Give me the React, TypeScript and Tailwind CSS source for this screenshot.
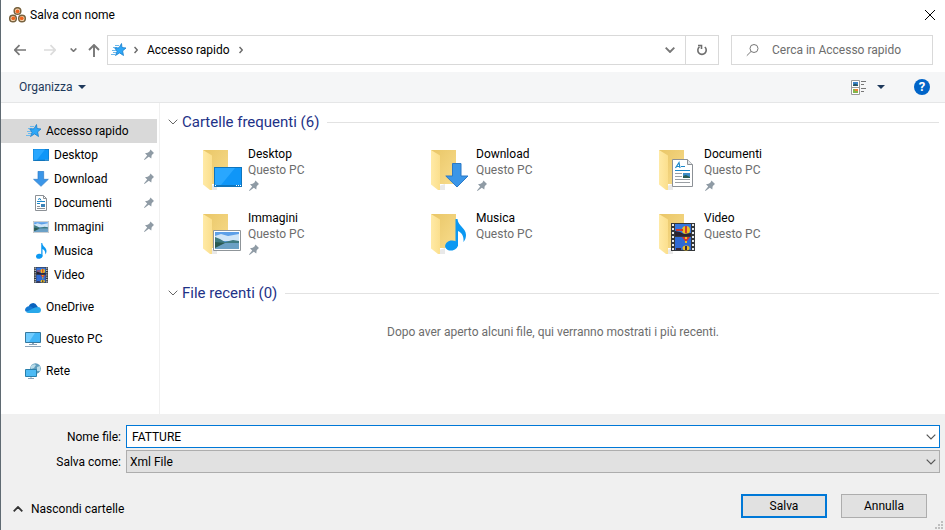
import type { ReactNode } from "react";

function Pin() {
  return (
    <svg width="12" height="12" viewBox="0 0 12 12" className="shrink-0" aria-hidden="true">
      <path d="M7.500 .5 11 4 9.800 5 8.600 6.500 8.300 9.500 5.800 7.800 1.500 11 1 10.500 4.200 6.500 2 4.300 4.700 3.800 6.500 2.400Z" fill="#8f9ba5" />
    </svg>
  );
}

function StarIcon() {
  return (
    <svg width="16" height="16" viewBox="0 0 16 16" className="shrink-0" aria-hidden="true">
      <path d="M4 3.500H8M2 5.500H6M1 8.500H5M2 10.500H5M0 12.500H4" stroke="#6db9ec" />
      <path d="M10.500 1.500 11 5.500 15 6 11.600 8.900 12.500 13.500 8.600 10.900 4.500 13.500 6 9.300 3.800 6 8 5.800Z" fill="#2ea7f7" stroke="#1b7fcb" strokeWidth=".8" />
    </svg>
  );
}

function DesktopArt() {
  return (
    <g>
      <path d="M0 0H28V20H0Z" fill="#0f75bd" />
      <path d="M1 1H27V18H1Z" fill="#0f96f8" />
      <path d="M1 1H21L7 18H1Z" fill="#29a7ff" />
      <path d="M1 18.500H3M22 18.500H27" stroke="#fff" strokeDasharray="1 1" />
    </g>
  );
}

function ArrowArt() {
  return <path d="M7.500.5H16V13H23L12 24 .8 13H7.500Z" fill="#3b96e8" stroke="#2b79c6" />;
}

function DocumentArt() {
  return (
    <g>
      <path d="M.5.500H15.500L20.500 5.500V27.500H.5Z" fill="#fff" stroke="#8c9196" />
      <path d="M15.500.500V5.500H20.500" fill="#e6e8ea" stroke="#8c9196" />
      <path d="M3.500 9 7 3.500 8 9M5 7.500H8M9 7.500H13M3 11.500H18" fill="none" stroke="#1b87c9" strokeWidth="1.200" />
      <path d="M3 14.500H10M3 17.500H10M3 20.500H18M3 23.500H18" stroke="#9a9fa4" />
      <path d="M11 14H18V19H11Z" fill="#3c8cc8" />
      <path d="M11 17 14 16 18 18V19H11Z" fill="#285b54" />
    </g>
  );
}

function PhotoArt() {
  return (
    <g>
      <path d="M.5.500H27.500V20.500H.5Z" fill="#fff" stroke="#8f9599" />
      <path d="M2 2H26V19H2Z" fill="#5c9fe8" />
      <path d="M2 6 8 4 15 6 26 4V11H2Z" fill="#cfe5f8" />
      <path d="M2 7 7 9 12 12 20 10 26 11V14H2Z" fill="#3f7a80" />
      <path d="M2 13H26V19H2Z" fill="#6ba0c4" />
      <path d="M2 12 12 13 2 18Z" fill="#2b5a50" />
    </g>
  );
}

function NoteArt() {
  return (
    <g fill="#0b98f2">
      <ellipse cx="6.500" cy="26.500" rx="6.500" ry="5" transform="rotate(-12 6.500 26.500)" />
      <path d="M10.500 0H12.500C13 7 21 9 21 16 21 19 20 21 18.500 23 19 17 17 14 13 12V27H10.500Z" />
    </g>
  );
}

function FilmArt() {
  return (
    <g>
      <path d="M0 0H24V28H0Z" fill="#34373a" />
      <path d="M2 1V28M22 1V28" stroke="#e7e9ea" strokeWidth="2" strokeDasharray="2 2" />
      <path d="M4 1H20V13H4Z" fill="#3576de" />
      <path d="M4 14H20V27H4Z" fill="#2f69d4" />
      <ellipse cx="15" cy="7" rx="4" ry="4" fill="#edbf20" />
      <path d="M14 3H16V10H14ZM5 6H12V8H5Z" fill="#c93a31" />
      <path d="M4 8 9 9 13 11 20 10V13H4Z" fill="#2a2330" />
      <path d="M11 14H19L16 18H14Z" fill="#d3352c" />
      <path d="M14 14H16V16H14ZM14 18H16V20H14Z" fill="#edbf20" />
      <ellipse cx="15" cy="25" rx="3.500" ry="2.500" fill="#edbf20" />
      <path d="M14 23H16V27H14ZM5 25H10V27H5Z" fill="#3b2a38" />
    </g>
  );
}

function SmallArt({ box, width = 16, height = 16, children }: { box: string; width?: number; height?: number; children: ReactNode }) {
  return (
    <span className="flex size-4 shrink-0 items-center justify-center">
      <svg width={width} height={height} viewBox={box} preserveAspectRatio="none" aria-hidden="true">
        {children}
      </svg>
    </span>
  );
}

function FolderIcon({ x, y, children }: { x: number; y: number; children: ReactNode }) {
  return (
    <svg width="48" height="48" viewBox="0 0 48 48" className="shrink-0" aria-hidden="true">
      <defs>
        <linearGradient id="folderBack" x1="0" x2="1" y1="0" y2="1">
          <stop offset="0" stopColor="#e9c667" />
          <stop offset="1" stopColor="#f8dc8c" />
        </linearGradient>
        <linearGradient id="folderFlap" x1="0" x2="1">
          <stop offset="0" stopColor="#ffeaa6" />
          <stop offset="1" stopColor="#fbdf8d" />
        </linearGradient>
      </defs>
      <path d="M11 40 17 38V44L11 44Z" fill="#e9e9e9" />
      <path d="M3 4H28V38H3Z" fill="url(#folderBack)" />
      <path d="M3 4 12 9.500V44L10 44 3 38.500Z" fill="url(#folderFlap)" />
      <g transform={`translate(${x} ${y})`}>{children}</g>
    </svg>
  );
}

function Chevron({ className, stroke = "#555", strokeWidth = 1.2, width = 10 }: { className?: string; stroke?: string; strokeWidth?: number; width?: number }) {
  return (
    <svg width={width} height="6" viewBox="0 0 10 6" className={className} aria-hidden="true">
      <path d="M.7.700 5 5 9.300.700" fill="none" stroke={stroke} strokeWidth={strokeWidth} />
    </svg>
  );
}

function CrumbArrow() {
  return (
    <svg width="4" height="8" viewBox="0 0 4 8" aria-hidden="true">
      <path d="M.5 1 3.300 4 .5 7" fill="none" stroke="#6a6a6a" strokeWidth="1.500" />
    </svg>
  );
}

function Caret() {
  return (
    <svg width="8" height="4" viewBox="0 0 8 4" aria-hidden="true">
      <path d="M0 0H8L4 4Z" fill="#1e395b" />
    </svg>
  );
}

const places = [
  { name: "Desktop", pinned: true, icon: <SmallArt box="0 0 28 20" height={12}><DesktopArt /></SmallArt> },
  { name: "Download", pinned: true, icon: <SmallArt box="0 0 24 25"><ArrowArt /></SmallArt> },
  {
    name: "Documenti",
    pinned: true,
    icon: (
      <SmallArt box="0 0 12 16" width={12}>
        <path d="M.5.500H8.500L11.500 3.500V15.500H.5Z" fill="#fff" stroke="#8c9196" />
        <path d="M8.500.500V3.500H11.500" fill="none" stroke="#8c9196" />
        <path d="M3 4.500 5 3.500 6 5.500M2 6.500H10M2 8.500H5" fill="none" stroke="#1b87c9" />
        <path d="M2 11.500H5M2 13.500H10" stroke="#8c9196" />
        <path d="M6 9H10V12H6Z" fill="#3b83b8" />
      </SmallArt>
    ),
  },
  { name: "Immagini", pinned: true, icon: <SmallArt box="0 0 28 21" height={12}><PhotoArt /></SmallArt> },
  { name: "Musica", pinned: false, icon: <SmallArt box="0 0 22 32" width={11}><NoteArt /></SmallArt> },
  { name: "Video", pinned: false, icon: <SmallArt box="0 0 24 28" width={14}><FilmArt /></SmallArt> },
];

const roots = [
  {
    name: "OneDrive",
    icon: (
      <SmallArt box="0 3 16 10" height={11}>
        <path d="M3.500 8A4.500 4.500 0 0 1 12 6.500L14 9 8 12 1 11Z" fill="#0a62bd" />
        <path d="M0 10Q1 6 6 7L14 12H3Q0 12 0 10Z" fill="#147ad4" />
        <path d="M1 12 10 8Q15 6.500 16 9.500 16 13 13 13H4Q2 13 1 12Z" fill="#28a8ea" />
      </SmallArt>
    ),
  },
  {
    name: "Questo PC",
    icon: (
      <SmallArt box="0 0 16 16">
        <path d="M.5 1.500H15.500V11.500H.5Z" fill="#42b5f6" stroke="#35799f" />
        <path d="M1 2H10L4 11H1Z" fill="#70ccff" />
        <path d="M7 12H9V13H7ZM4 13H12V14H4ZM0 15H16V16H0Z" fill="#8ba3b8" />
      </SmallArt>
    ),
  },
  {
    name: "Rete",
    icon: (
      <SmallArt box="0 0 16 16">
        <circle cx="10.500" cy="5.500" r="5.300" fill="#5f9dbd" />
        <path d="M6 3Q9 0 11 2L9 5 6 6ZM12 4 15 3V8L12 8Z" fill="#b9dce9" />
        <path d="M.5 6.500H11.500V13.500H.5Z" fill="#4dbbf5" stroke="#287fab" />
        <path d="M3 15.500H9M6 14V15" stroke="#8ba3b8" />
      </SmallArt>
    ),
  },
];

const folders = [
  { name: "Desktop", pinned: true, icon: <FolderIcon x={14} y={21}><DesktopArt /></FolderIcon> },
  { name: "Download", pinned: true, icon: <FolderIcon x={17} y={17}><ArrowArt /></FolderIcon> },
  { name: "Documenti", pinned: true, icon: <FolderIcon x={16} y={13}><DocumentArt /></FolderIcon> },
  { name: "Immagini", pinned: true, icon: <FolderIcon x={13} y={20}><PhotoArt /></FolderIcon> },
  { name: "Musica", pinned: false, icon: <FolderIcon x={17} y={9}><NoteArt /></FolderIcon> },
  { name: "Video", pinned: false, icon: <FolderIcon x={15} y={13}><FilmArt /></FolderIcon> },
];

function SectionHeading({ title }: { title: string }) {
  return (
    <h2 className="flex h-6 items-center gap-2">
      <button className="flex shrink-0 items-center gap-[3px] text-[15px] leading-6 text-[#1e3287]">
        <Chevron stroke="#666" width={12} strokeWidth={1} />
        {title}
      </button>
      <span className="h-px flex-1 bg-[#e2e2e2]" />
    </h2>
  );
}

export default function App() {
  return (
    <div className="flex min-h-screen flex-col border-l border-[#5f6a72] bg-white font-[Roboto,'Open_Sans',sans-serif] text-[12px] leading-4 text-black">
      <header className="flex h-[30px] items-center gap-1 pr-[7px] pl-2">
        <svg width="17" height="16" viewBox="0 0 17 16" aria-hidden="true">
          <g fill="#f4d9b5" stroke="#77623f" strokeWidth="1.500">
            <circle cx="8.500" cy="4" r="3.300" />
            <circle cx="4" cy="11.500" r="3.300" />
            <circle cx="13" cy="11.500" r="3.300" />
          </g>
          <g fill="#f0641e">
            <circle cx="8.500" cy="4.300" r="1.900" />
            <circle cx="4.300" cy="11.300" r="1.900" />
            <circle cx="12.700" cy="11.300" r="1.900" />
          </g>
        </svg>
        <h1 className="flex-1">Salva con nome</h1>
        <button aria-label="Chiudi" className="flex size-4 items-center justify-center">
          <svg width="12" height="12" viewBox="0 0 12 12" aria-hidden="true">
            <path d="M1 1 11 11M11 1 1 11" stroke="#000" />
          </svg>
        </button>
      </header>

      <nav className="flex h-[42px] items-start gap-3 pt-[5px] pr-3 pl-[13px]" aria-label="Percorso">
        <div className="flex min-w-0 flex-1 items-center">
          <button aria-label="Indietro" className="shrink-0">
            <svg width="12" height="12" viewBox="0 0 12 12" aria-hidden="true">
              <path d="M12 6H1M5.500 1.200.8 6 5.500 10.800" fill="none" stroke="#777" strokeWidth="1.700" />
            </svg>
          </button>
          <button aria-label="Avanti" className="ml-[18px] shrink-0">
            <svg width="12" height="12" viewBox="0 0 12 12" aria-hidden="true">
              <path d="M0 6H11M6.500 1.200 11.200 6 6.500 10.800" fill="none" stroke="#dcdcdc" strokeWidth="1.700" />
            </svg>
          </button>
          <button aria-label="Posizioni recenti" className="ml-[14px] shrink-0">
            <Chevron stroke="#777" strokeWidth={2.4} width={7} className="h-1" />
          </button>
          <button aria-label="Livello superiore" className="ml-[11px] shrink-0">
            <svg width="12" height="13" viewBox="0 0 12 13" aria-hidden="true">
              <path d="M6 13V1M1 6 6 1 11 6" fill="none" stroke="#777" strokeWidth="1.900" />
            </svg>
          </button>
          <div className="ml-[7px] flex h-[30px] min-w-0 flex-1 border border-[#d9d9d9]">
            <div className="flex flex-1 items-center pl-[3px]">
              <StarIcon />
              <span className="ml-[7px]"><CrumbArrow /></span>
              <button className="ml-[9px] shrink-0">Accesso rapido</button>
              <span className="ml-[9px]"><CrumbArrow /></span>
            </div>
            <button aria-label="Percorsi precedenti" className="flex w-[30px] items-center justify-center">
              <Chevron stroke="#777" strokeWidth={1.9} />
            </button>
            <button aria-label="Aggiorna" className="flex w-[33px] items-center justify-center border-l border-[#d9d9d9]">
              <svg width="12" height="12" viewBox="0 0 12 12" aria-hidden="true">
                <path d="M3.500 2.800A4.200 4.200 0 1 0 8.800 3M2 1.500H5.500V5" fill="none" stroke="#6e6e6e" strokeWidth="1.600" />
              </svg>
            </button>
          </div>
        </div>
        <label className="flex h-[30px] w-[202px] items-center gap-3 border border-[#d9d9d9] pl-[14px]">
          <svg width="14" height="14" viewBox="0 0 14 14" className="shrink-0" aria-hidden="true">
            <circle cx="8" cy="5.500" r="4" fill="none" stroke="#777" />
            <path d="M5 8.500.8 12.700" stroke="#777" />
          </svg>
          <input type="search" aria-label="Cerca in Accesso rapido" placeholder="Cerca in Accesso rapido" className="w-full min-w-0 outline-none placeholder:text-[#6d6d6d]" />
        </label>
      </nav>

      <div className="flex h-[31px] items-center border-b border-[#e5e6e7] bg-[#f5f6f7] pr-[15px] pl-[18px] text-[#1e395b]">
        <button className="flex items-center gap-[6px]">Organizza <Caret /></button>
        <button aria-label="Cambia visualizzazione" className="ml-auto flex items-center gap-[10px]">
          <svg width="16" height="15" viewBox="0 0 16 15" aria-hidden="true">
            <path d="M.5.500H8.500V14.500H.5ZM.5 7.500H8.500" fill="#fff" stroke="#9a9a9a" />
            <path d="M2 2H7V5H2Z" fill="#3c83c9" />
            <path d="M2 5 4 3.500 7 5V6H2Z" fill="#2a5561" />
            <path d="M2 9H7V13H2Z" fill="#84b64b" />
            <path d="M4 9H7V11H4Z" fill="#ed8237" />
            <path d="M10 1.500H15M10 4.500H13M10 8.500H15M10 11.500H13" stroke="#777" />
          </svg>
          <Caret />
        </button>
        <button aria-label="Guida" className="ml-[29px] flex size-4 items-center justify-center rounded-full bg-[#0064c8] text-[13px] font-bold text-white">?</button>
      </div>

      <div className="flex flex-1">
        <aside className="w-[159px] shrink-0 border-r border-[#f0f0f0] pt-4 pr-[2px]">
          <button className="flex h-6 w-full items-center gap-1 bg-[#d9d9d9] pl-[25px]"><StarIcon />Accesso rapido</button>
          <ul>
            {places.map((place) => (
              <li key={place.name}>
                <button className="flex h-6 w-full items-center gap-[5px] pr-[2px] pl-8">
                  {place.icon}
                  <span className="flex-1 text-left">{place.name}</span>
                  {place.pinned && <Pin />}
                </button>
              </li>
            ))}
          </ul>
          <ul className="mt-2 flex flex-col gap-2">
            {roots.map((root) => (
              <li key={root.name}>
                <button className="flex h-6 w-full items-center gap-[5px] pl-6">{root.icon}{root.name}</button>
              </li>
            ))}
          </ul>
        </aside>

        <main className="min-w-0 flex-1 pt-[7px] pr-[6px] pl-[7px]">
          <section>
            <SectionHeading title="Cartelle frequenti (6)" />
            <ul className="grid grid-cols-[repeat(auto-fill,228px)] pt-3 pl-[33px]">
              {folders.map((folder) => (
                <li key={folder.name}>
                  <button className="flex h-16 w-full items-start text-left">
                    {folder.icon}
                    <span className="flex flex-col">
                      <span>{folder.name}</span>
                      <span className="text-[#6d6d6d]">Questo PC</span>
                      {folder.pinned && <span className="pt-[2px]"><Pin /></span>}
                    </span>
                  </button>
                </li>
              ))}
            </ul>
          </section>
          <section className="pt-[7px]">
            <SectionHeading title="File recenti (0)" />
            <p className="pt-[19px] text-center text-[#6d6d6d]">Dopo aver aperto alcuni file, qui verranno mostrati i più recenti.</p>
          </section>
        </main>
      </div>

      <footer className="bg-[#f0f0f0] pt-[11px]">
        <div className="grid grid-cols-[120px_1fr] items-center gap-x-[5px] gap-y-[2px] pr-[5px]">
          <label htmlFor="fileName" className="text-right">Nome file:</label>
          <div className="flex h-[23px] items-center border border-[#0078d7] bg-white pr-[3px] pl-[5px]">
            <input id="fileName" type="text" defaultValue="FATTURE" className="min-w-0 flex-1 outline-none" />
            <button aria-label="Nomi precedenti"><Chevron /></button>
          </div>
          <label htmlFor="fileType" className="text-right">Salva come:</label>
          <div className="grid h-[23px] items-center border border-[#adadad] bg-[#e1e1e1]">
            <select id="fileType" className="col-start-1 row-start-1 w-full appearance-none pr-5 pl-[3px] outline-none">
              <option>Xml File</option>
            </select>
            <Chevron className="pointer-events-none col-start-1 row-start-1 mr-[3px] justify-self-end" />
          </div>
        </div>
        <div className="flex h-[57px] items-start pt-[21px] pl-3">
          <button className="flex h-[30px] items-center gap-2">
            <Chevron className="rotate-180" stroke="#333" strokeWidth={1.8} />
            Nascondi cartelle
          </button>
          <div className="ml-auto flex gap-[14px]">
            <button className="h-6 w-[86px] border-2 border-[#0078d7] bg-[#e1e1e1]">Salva</button>
            <button className="h-6 w-[86px] border border-[#adadad] bg-[#e1e1e1]">Annulla</button>
          </div>
          <svg width="8" height="8" viewBox="0 0 8 8" className="mr-[2px] mb-px ml-2 self-end" aria-hidden="true">
            <path d="M6 0H8V2H6ZM3 3H5V5H3ZM6 3H8V5H6ZM0 6H2V8H0ZM3 6H5V8H3ZM6 6H8V8H6Z" fill="#bfbfbf" />
          </svg>
        </div>
      </footer>
    </div>
  );
}
